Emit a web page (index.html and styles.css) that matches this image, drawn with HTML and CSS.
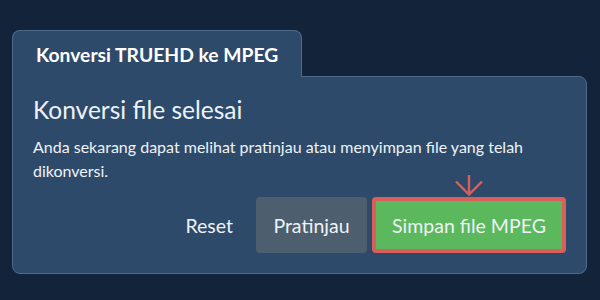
FILE: index.html
```html
<!DOCTYPE html>
<html>
<head>
<meta charset="utf-8">
<link rel="stylesheet" href="styles.css">
</head>
<body>
<div class="wrap">
  <div class="tab">Konversi TRUEHD ke MPEG</div>
  <div class="panel">
    <h1 class="title">Konversi file selesai</h1>
    <p class="desc">Anda sekarang dapat melihat pratinjau atau menyimpan file yang telah dikonversi.</p>
    <div class="actions">
      <button class="btn btn-link">Reset</button>
      <button class="btn btn-gray">Pratinjau</button>
      <div class="highlight">
        <svg class="arrow" width="30" height="22" viewBox="0 0 30 22">
          <path d="M15 0 V19.5 M2 6.5 L15 19.5 L28 6.5" fill="none" stroke="#d9605a" stroke-width="2.4"/>
        </svg>
        <button class="btn btn-green">Simpan file MPEG</button>
      </div>
    </div>
  </div>
</div>
</body>
</html>
```
FILE: styles.css
```css
html, body {
  margin: 0;
  padding: 0;
}
body {
  background: #13233a;
  font-family: Lato, "Open Sans", sans-serif;
  color: #eef2f6;
  width: 600px;
  height: 300px;
  overflow: hidden;
}
.wrap {
  padding: 30px 0 0 12px;
  width: 575px;
}
.tab {
  position: relative;
  z-index: 1;
  width: 290px;
  box-sizing: border-box;
  height: 47px;
  margin-bottom: -1px;
  background: #2e4a6a;
  border: 1px solid #4f6b8b;
  border-bottom: none;
  border-radius: 8px 8px 0 0;
  font-weight: 700;
  font-size: 19.3px;
  line-height: 24px;
  padding: 12px 0 0 23px;
  color: #ffffff;
}
.panel {
  background: #2e4a6a;
  border: 1px solid #4f6b8b;
  border-radius: 0 8px 8px 8px;
  box-sizing: border-box;
  height: 198px;
  padding: 18px 20px 0 20px;
}
.title {
  margin: 0;
  font-weight: 400;
  font-size: 24.5px;
  line-height: 30px;
  color: #eef2f6;
}
.desc {
  margin: 10px 0 0 0;
  font-size: 16px;
  line-height: 24px;
  color: #eef2f6;
}
.actions {
  display: flex;
  justify-content: flex-end;
  align-items: center;
  gap: 5px;
  margin-top: 14px;
}
.btn {
  font-family: Lato, "Open Sans", sans-serif;
  font-size: 19.5px;
  color: #eef2f6;
  border: none;
  border-radius: 4px;
  height: 56px;
  cursor: pointer;
}
.btn-link {
  background: transparent;
  padding: 0 18px;
}
.btn-gray {
  background: #4d5e6e;
  width: 111px;
}
.highlight {
  position: relative;
}
.arrow {
  position: absolute;
  left: 82px;
  top: -22px;
}
.btn-green {
  background: #5cb85c;
  border: 4px solid #d9605a;
  width: 194px;
  display: block;
}
```
